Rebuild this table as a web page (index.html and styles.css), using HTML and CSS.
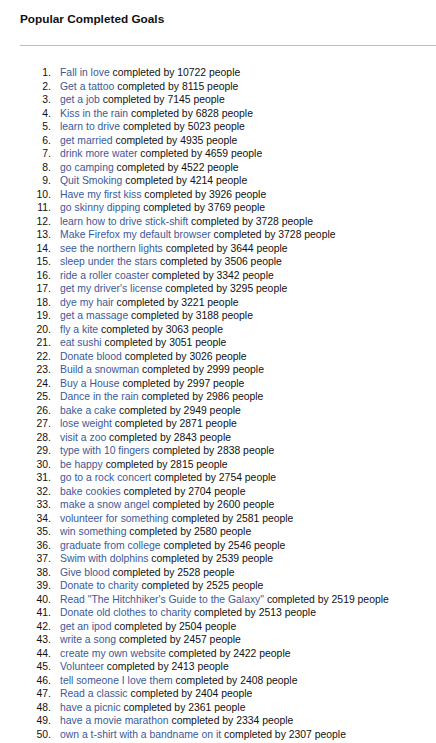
FILE: index.html
```html
<!DOCTYPE html>
<html>
<head>
<meta charset="utf-8">
<link rel="stylesheet" href="styles.css">
</head>
<body>
<div class="page">
  <h2 class="title">Popular Completed Goals</h2>
  <hr class="rule">
  <ol class="goals">
    <li><span class="num">1.</span><span><a href="#">Fall in love</a> completed by 10722 people</span></li>
    <li><span class="num">2.</span><span><a href="#">Get a tattoo</a> completed by 8115 people</span></li>
    <li><span class="num">3.</span><span><a href="#">get a job</a> completed by 7145 people</span></li>
    <li><span class="num">4.</span><span><a href="#">Kiss in the rain</a> completed by 6828 people</span></li>
    <li><span class="num">5.</span><span><a href="#">learn to drive</a> completed by 5023 people</span></li>
    <li><span class="num">6.</span><span><a href="#">get married</a> completed by 4935 people</span></li>
    <li><span class="num">7.</span><span><a href="#">drink more water</a> completed by 4659 people</span></li>
    <li><span class="num">8.</span><span><a href="#">go camping</a> completed by 4522 people</span></li>
    <li><span class="num">9.</span><span><a href="#">Quit Smoking</a> completed by 4214 people</span></li>
    <li><span class="num">10.</span><span><a href="#">Have my first kiss</a> completed by 3926 people</span></li>
    <li><span class="num">11.</span><span><a href="#">go skinny dipping</a> completed by 3769 people</span></li>
    <li><span class="num">12.</span><span><a href="#">learn how to drive stick-shift</a> completed by 3728 people</span></li>
    <li><span class="num">13.</span><span><a href="#">Make Firefox my default browser</a> completed by 3728 people</span></li>
    <li><span class="num">14.</span><span><a href="#">see the northern lights</a> completed by 3644 people</span></li>
    <li><span class="num">15.</span><span><a href="#">sleep under the stars</a> completed by 3506 people</span></li>
    <li><span class="num">16.</span><span><a href="#">ride a roller coaster</a> completed by 3342 people</span></li>
    <li><span class="num">17.</span><span><a href="#">get my driver's license</a> completed by 3295 people</span></li>
    <li><span class="num">18.</span><span><a href="#">dye my hair</a> completed by 3221 people</span></li>
    <li><span class="num">19.</span><span><a href="#">get a massage</a> completed by 3188 people</span></li>
    <li><span class="num">20.</span><span><a href="#">fly a kite</a> completed by 3063 people</span></li>
    <li><span class="num">21.</span><span><a href="#">eat sushi</a> completed by 3051 people</span></li>
    <li><span class="num">22.</span><span><a href="#">Donate blood</a> completed by 3026 people</span></li>
    <li><span class="num">23.</span><span><a href="#">Build a snowman</a> completed by 2999 people</span></li>
    <li><span class="num">24.</span><span><a href="#">Buy a House</a> completed by 2997 people</span></li>
    <li><span class="num">25.</span><span><a href="#">Dance in the rain</a> completed by 2986 people</span></li>
    <li><span class="num">26.</span><span><a href="#">bake a cake</a> completed by 2949 people</span></li>
    <li><span class="num">27.</span><span><a href="#">lose weight</a> completed by 2871 people</span></li>
    <li><span class="num">28.</span><span><a href="#">visit a zoo</a> completed by 2843 people</span></li>
    <li><span class="num">29.</span><span><a href="#">type with 10 fingers</a> completed by 2838 people</span></li>
    <li><span class="num">30.</span><span><a href="#">be happy</a> completed by 2815 people</span></li>
    <li><span class="num">31.</span><span><a href="#">go to a rock concert</a> completed by 2754 people</span></li>
    <li><span class="num">32.</span><span><a href="#">bake cookies</a> completed by 2704 people</span></li>
    <li><span class="num">33.</span><span><a href="#">make a snow angel</a> completed by 2600 people</span></li>
    <li><span class="num">34.</span><span><a href="#">volunteer for something</a> completed by 2581 people</span></li>
    <li><span class="num">35.</span><span><a href="#">win something</a> completed by 2580 people</span></li>
    <li><span class="num">36.</span><span><a href="#">graduate from college</a> completed by 2546 people</span></li>
    <li><span class="num">37.</span><span><a href="#">Swim with dolphins</a> completed by 2539 people</span></li>
    <li><span class="num">38.</span><span><a href="#">Give blood</a> completed by 2528 people</span></li>
    <li><span class="num">39.</span><span><a href="#">Donate to charity</a> completed by 2525 people</span></li>
    <li><span class="num">40.</span><span><a href="#">Read "The Hitchhiker's Guide to the Galaxy"</a> completed by 2519 people</span></li>
    <li><span class="num">41.</span><span><a href="#">Donate old clothes to charity</a> completed by 2513 people</span></li>
    <li><span class="num">42.</span><span><a href="#">get an ipod</a> completed by 2504 people</span></li>
    <li><span class="num">43.</span><span><a href="#">write a song</a> completed by 2457 people</span></li>
    <li><span class="num">44.</span><span><a href="#">create my own website</a> completed by 2422 people</span></li>
    <li><span class="num">45.</span><span><a href="#">Volunteer</a> completed by 2413 people</span></li>
    <li><span class="num">46.</span><span><a href="#">tell someone I love them</a> completed by 2408 people</span></li>
    <li><span class="num">47.</span><span><a href="#">Read a classic</a> completed by 2404 people</span></li>
    <li><span class="num">48.</span><span><a href="#">have a picnic</a> completed by 2361 people</span></li>
    <li><span class="num">49.</span><span><a href="#">have a movie marathon</a> completed by 2334 people</span></li>
    <li><span class="num">50.</span><span><a href="#">own a t-shirt with a bandname on it</a> completed by 2307 people</span></li>
  </ol>
</div>
</body>
</html>
```

FILE: styles.css
```css
html, body {
  margin: 0;
  padding: 0;
  background: #ffffff;
}

.page {
  padding: 12px 0 0 20px;
  font-family: "Liberation Sans", Arial, sans-serif;
  color: #111111;
}

.title {
  margin: 0;
  font-size: 11.8px;
  font-weight: bold;
  line-height: 14px;
  color: #111111;
}

.rule {
  margin: 19px 0 0 0;
  border: 0;
  border-top: 1px solid #bdbdbd;
  height: 0;
}

.goals {
  list-style: none;
  margin: 0;
  padding: 20px 0 0 0;
  font-size: 10.4px;
  line-height: 13.5px;
}

.goals li {
  display: flex;
  white-space: nowrap;
}

.num {
  width: 31px;
  text-align: right;
  margin-right: 9px;
  flex: none;
  color: #111111;
}

.goals a {
  color: #3b5998;
  text-decoration: none;
}
```
